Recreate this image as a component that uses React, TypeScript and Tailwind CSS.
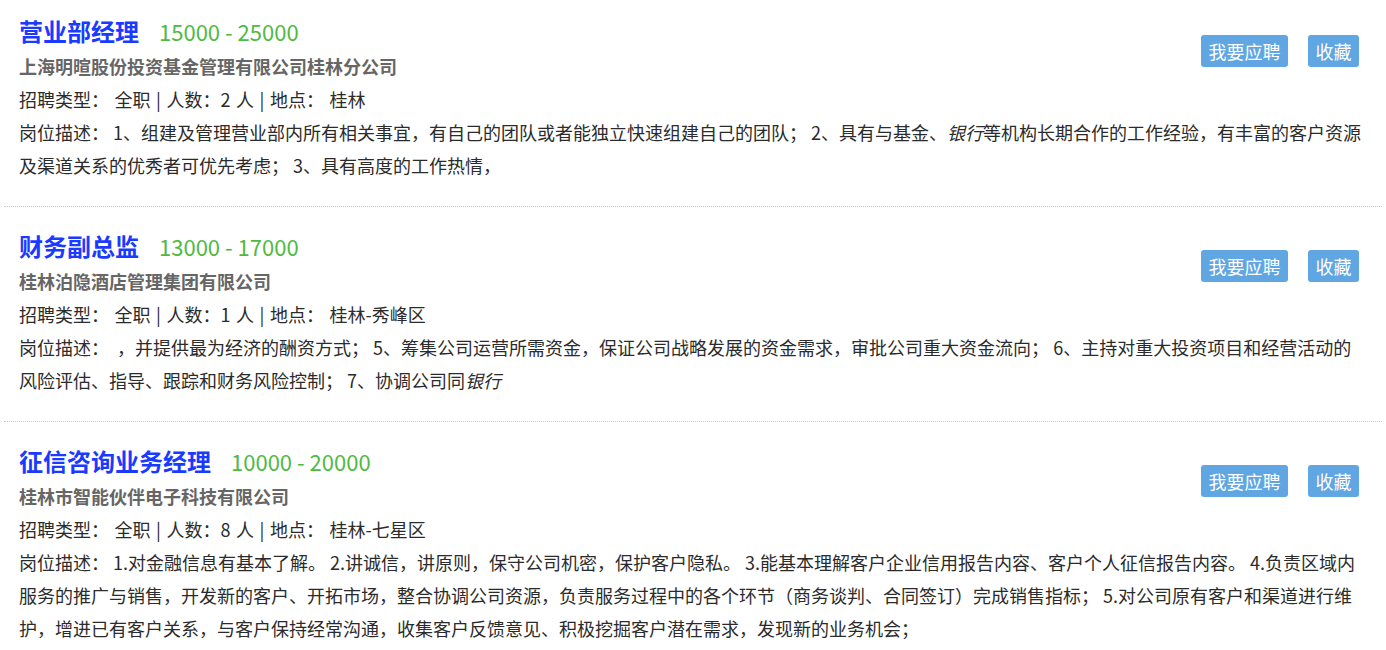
interface Job {
  title: string;
  salary: string;
  company: string;
  count: number;
  place: string;
  desc: React.ReactNode;
}

const jobs: Job[] = [
  {
    title: '营业部经理',
    salary: '15000 - 25000',
    company: '上海明暄股份投资基金管理有限公司桂林分公司',
    count: 2,
    place: '桂林',
    desc: (
      <>
        1、组建及管理营业部内所有相关事宜，有自己的团队或者能独立快速组建自己的团队； 2、具有与基金、<em>银行</em>
        等机构长期合作的工作经验，有丰富的客户资源及渠道关系的优秀者可优先考虑； 3、具有高度的工作热情，
      </>
    ),
  },
  {
    title: '财务副总监',
    salary: '13000 - 17000',
    company: '桂林泊隐酒店管理集团有限公司',
    count: 1,
    place: '桂林-秀峰区',
    desc: (
      <>
        {'\u00a0'}，并提供最为经济的酬资方式； 5、筹集公司运营所需资金，保证公司战略发展的资金需求，审批公司重大资金流向； 6、主持对重大投资项目和经营活动的风险评估、指导、跟踪和财务风险控制； 7、协调公司同<em>银行</em>
      </>
    ),
  },
  {
    title: '征信咨询业务经理',
    salary: '10000 - 20000',
    company: '桂林市智能伙伴电子科技有限公司',
    count: 8,
    place: '桂林-七星区',
    desc: (
      <>
        1.对金融信息有基本了解。 2.讲诚信，讲原则，保守公司机密，保护客户隐私。 3.能基本理解客户企业信用报告内容、客户个人征信报告内容。 4.负责区域内服务的推广与销售，开发新的客户、开拓市场，整合协调公司资源，负责服务过程中的各个环节（商务谈判、合同签订）完成销售指标； 5.对公司原有客户和渠道进行维护，增进已有客户关系，与客户保持经常沟通，收集客户反馈意见、积极挖掘客户潜在需求，发现新的业务机会；
      </>
    ),
  },
];

function JobItem({ job, first }: { job: Job; first: boolean }) {
  return (
    <li
      className={`border-b border-dotted border-[#c8c8c8] px-[15px] pb-[24px] ${
        first ? 'pt-[13px]' : 'pt-[21px]'
      }`}
    >
      <div className="float-right mr-[8px] mt-[22px] flex gap-[20px]">
        <button
          type="button"
          className="h-[32px] w-[87px] rounded-[3px] bg-[#5fa6e2] text-center text-[18px] leading-[32px] text-white"
        >
          我要应聘
        </button>
        <button
          type="button"
          className="h-[32px] w-[51px] rounded-[3px] bg-[#5fa6e2] text-center text-[18px] leading-[32px] text-white"
        >
          收藏
        </button>
      </div>
      <div className="flex items-baseline leading-[35px]">
        <span className="text-[24px] font-bold text-[#1a3bff]">{job.title}</span>
        <span className="ml-[20px] text-[22px] text-[#4fba3f]">{job.salary}</span>
      </div>
      <div className="text-[18px] font-bold leading-[34px] text-[#666]">{job.company}</div>
      <div className="text-[18px] leading-[33px] text-[#2b2b2b] [word-spacing:1.5px]">
        招聘类型： 全职 | 人数：{job.count} 人 | 地点： {job.place}
      </div>
      <div className="text-[18px] leading-[33px] text-[#2b2b2b]">
        岗位描述： {job.desc}
      </div>
    </li>
  );
}

export default function App() {
  return (
    <div
      className="min-h-[650px] bg-white px-[4px]"
      style={{ fontFamily: '"Microsoft YaHei", "Noto Sans CJK SC", sans-serif' }}
    >
      <ul>
        {jobs.map((job, i) => (
          <JobItem key={job.title} job={job} first={i === 0} />
        ))}
      </ul>
    </div>
  );
}
